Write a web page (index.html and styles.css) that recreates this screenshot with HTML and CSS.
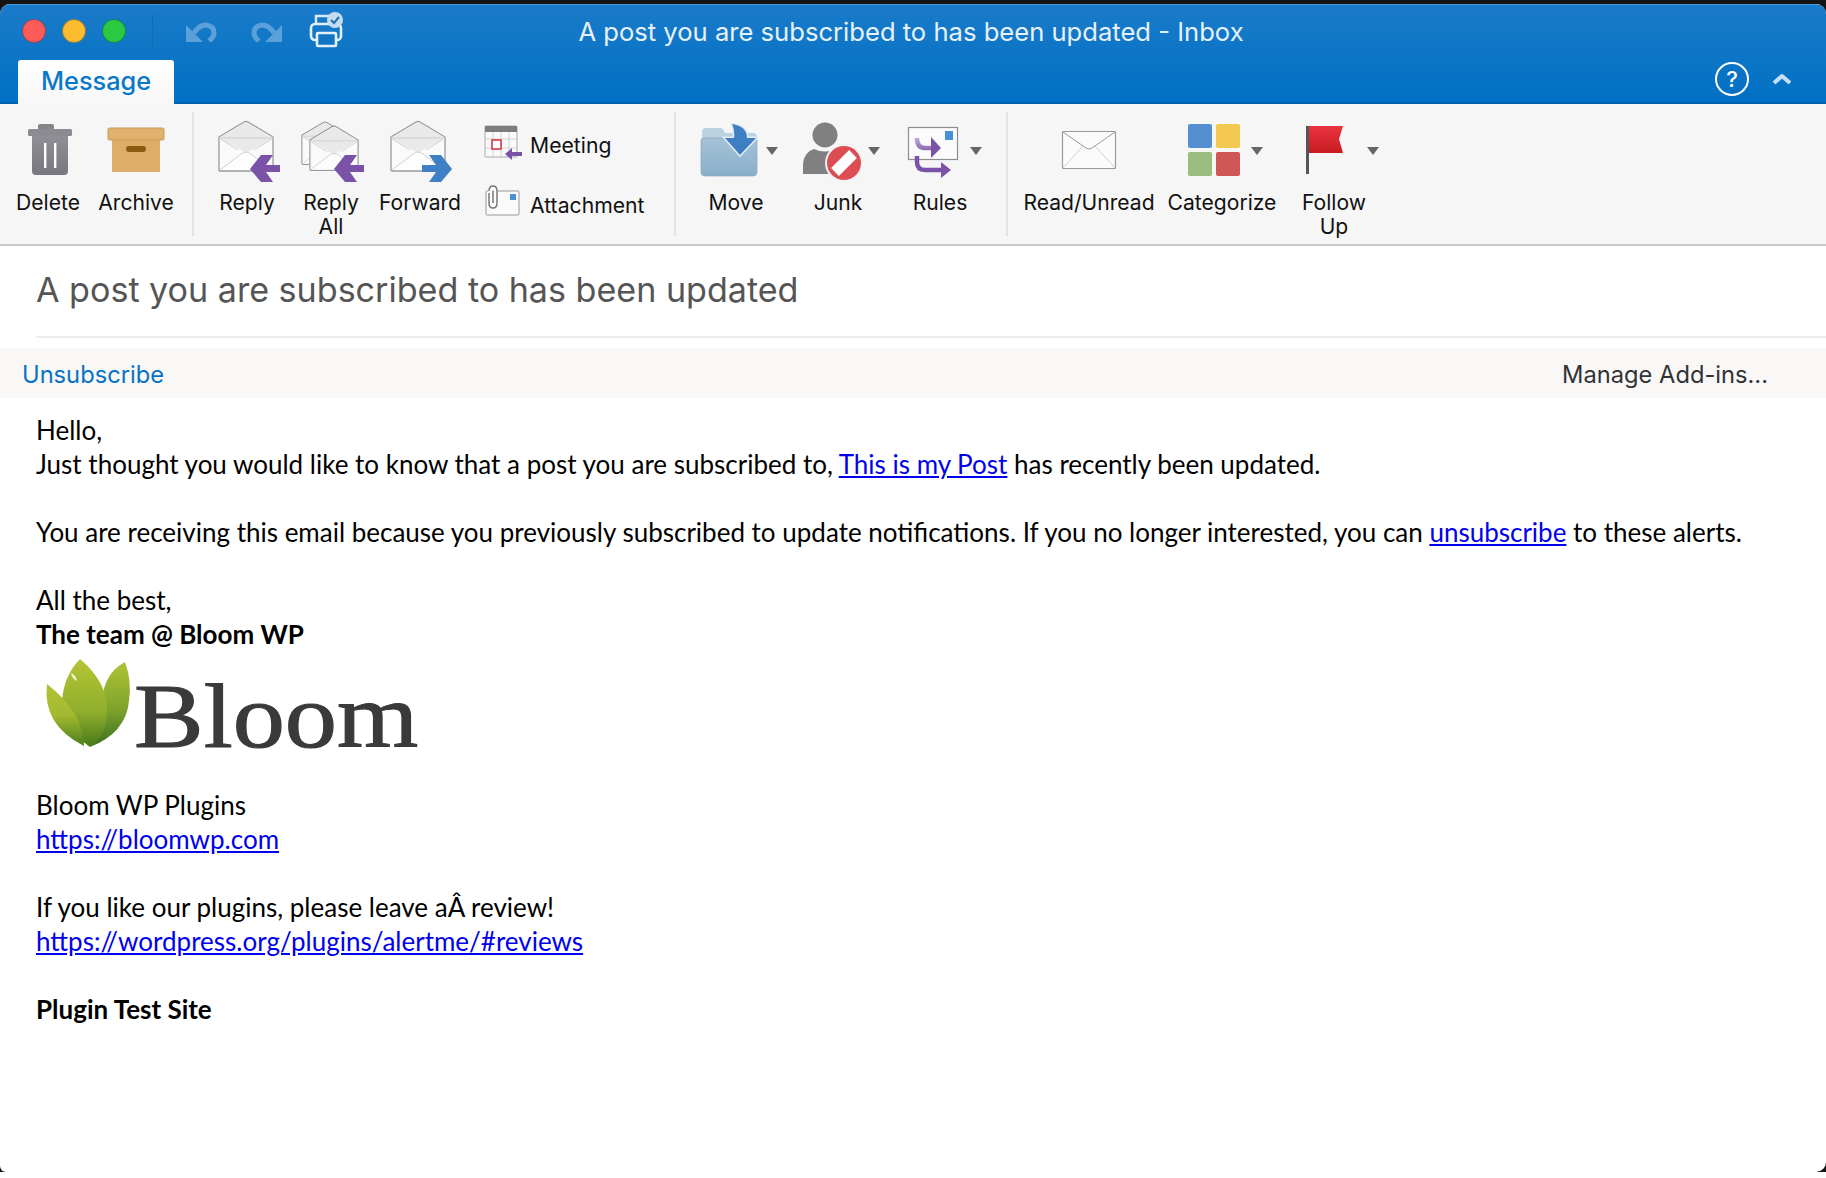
FILE: index.html
```html
<!DOCTYPE html>
<html lang="en">
<head>
    <meta charset="UTF-8">
    <title>A post you are subscribed to has been updated - Inbox</title>
    <link rel="stylesheet" href="styles.css">
</head>
<body>
    <svg class="sprite" aria-hidden="true">
        <defs>
            <symbol id="open-env" viewBox="0 0 56 52">
                <path d="M1 17 L26 2 Q28 1 30 2 L55 17 V50 Q55 51 54 51 H2 Q1 51 1 50 Z" fill="#fafafa" stroke="#9a9a9a" stroke-width="1.3"/>
                <path d="M2 18 L26 3 Q28 2 30 3 L54 18 L28 33 Z" fill="#e9e9e9"/>
                <path d="M1 18 H55 M1 18 L20 30 M55 18 L36 30" fill="none" stroke="#cfcfcf" stroke-width="1"/>
                <path d="M2 50 L23 34 Q28 30 33 34 L54 50" fill="#fdfdfd" stroke="#cfcfcf" stroke-width="1"/>
            </symbol>
            <symbol id="undo-arrow" viewBox="0 0 32 20">
                <path d="M8 11 Q13 3 20 3 Q28 4 28 11 Q28 15 23 19" fill="none" stroke="#5ba0d9" stroke-width="5"/>
                <path d="M0 3 V20 H17 Z" fill="#5ba0d9"/>
            </symbol>
            <linearGradient id="trash-grad" x1="0" y1="0" x2="0" y2="1">
                <stop offset="0" stop-color="#8f8f95"/>
                <stop offset="1" stop-color="#77777f"/>
            </linearGradient>
            <linearGradient id="folder-grad" x1="0" y1="0" x2="0" y2="1">
                <stop offset="0" stop-color="#a5c2d8"/>
                <stop offset="1" stop-color="#8aafca"/>
            </linearGradient>
            <linearGradient id="flag-grad" x1="0" y1="0" x2="0" y2="1">
                <stop offset="0" stop-color="#ea3340"/>
                <stop offset="1" stop-color="#c81c22"/>
            </linearGradient>
            <linearGradient id="rule-grad" gradientUnits="userSpaceOnUse" x1="0" y1="22" x2="0" y2="40">
                <stop offset="0" stop-color="#c9b8de"/>
                <stop offset="1" stop-color="#7a52a8"/>
            </linearGradient>
            <linearGradient id="leaf-a" x1="0" y1="0" x2="0" y2="1">
                <stop offset="0" stop-color="#b5c534"/>
                <stop offset="0.6" stop-color="#8fae2c"/>
                <stop offset="1" stop-color="#47791c"/>
            </linearGradient>
            <linearGradient id="leaf-b" x1="0" y1="0" x2="0" y2="1">
                <stop offset="0" stop-color="#b0c235"/>
                <stop offset="0.55" stop-color="#7fa42c"/>
                <stop offset="1" stop-color="#3b6f1c"/>
            </linearGradient>
            <linearGradient id="leaf-c" x1="0" y1="0" x2="0" y2="1">
                <stop offset="0" stop-color="#b2c239"/>
                <stop offset="0.5" stop-color="#a3ba2e"/>
                <stop offset="1" stop-color="#4d7f1e"/>
            </linearGradient>
        </defs>
    </svg>

    <div class="frame">
        <div class="window">
            <header class="chrome">
                <div class="titlebar">
                    <div class="controls">
                        <span class="light light-red"></span>
                        <span class="light light-yellow"></span>
                        <span class="light light-green"></span>
                        <span class="divider"></span>
                        <svg class="qa-undo" width="32" height="20"><use href="#undo-arrow"/></svg>
                        <svg class="qa-redo" width="32" height="20"><use href="#undo-arrow" transform="translate(32 0) scale(-1 1)"/></svg>
                        <svg class="qa-print" width="36" height="36" viewBox="0 0 36 36">
                            <path d="M7 13 V4 H20 V13" fill="none" stroke="#d9e9f7" stroke-width="2.4"/>
                            <rect x="2" y="12" width="30" height="16" rx="4" fill="none" stroke="#e3eff9" stroke-width="2.6"/>
                            <rect x="8" y="21" width="19" height="13" rx="1" fill="#1275c4" stroke="#e3eff9" stroke-width="2.6"/>
                            <circle cx="26" cy="8" r="8" fill="#c4dcf1"/>
                            <path d="M22 8 L25 11 L30 5" fill="none" stroke="#1d6fb5" stroke-width="2"/>
                        </svg>
                    </div>
                    <div class="window-title">A post you are subscribed to has been updated - Inbox</div>
                    <div></div>
                </div>
                <div class="tabrow">
                    <div class="tab">Message</div>
                    <div class="tabrow-right">
                        <span class="help">?</span>
                        <svg width="20" height="12" viewBox="0 0 20 12">
                            <path d="M2 10 L10 3 L18 10" fill="none" stroke="#c5dff5" stroke-width="4" stroke-linejoin="round"/>
                        </svg>
                    </div>
                </div>
            </header>

            <div class="ribbon">
                <div class="rb-item w-delete">
                    <svg class="rb-icon" viewBox="0 0 72 72">
                        <rect x="26" y="10" width="16" height="6" rx="2" fill="#85858b"/>
                        <rect x="16" y="15" width="44" height="7" rx="1.5" fill="#8b8b91"/>
                        <path d="M20 22 H56 V57 Q56 61 52 61 H24 Q20 61 20 57 Z" fill="url(#trash-grad)"/>
                        <rect x="32" y="29" width="2.4" height="25" fill="#fff"/>
                        <rect x="42" y="29" width="2.4" height="25" fill="#fff"/>
                    </svg>
                    <span class="rb-label">Delete</span>
                </div>
                <div class="rb-item w-delete">
                    <svg class="rb-icon" viewBox="0 0 72 72">
                        <rect x="12" y="20" width="48" height="38" rx="1" fill="#deae68"/>
                        <rect x="8" y="14" width="56" height="12" rx="1.5" fill="#e0b16e" stroke="#c99a52" stroke-width="1"/>
                        <rect x="26" y="32" width="20" height="6" rx="3" fill="#8a5a10"/>
                    </svg>
                    <span class="rb-label">Archive</span>
                </div>
                <div class="rb-sep sep-one"></div>

                <div class="rb-item w-reply first-reply">
                    <svg class="rb-icon" viewBox="0 0 72 72">
                        <use href="#open-env" x="7" y="6" width="56" height="52"/>
                        <path d="M39 55 L50 41 H62 L55 51 H69 V58 H55 L62 68 H50 Z" fill="#7a52a8"/>
                    </svg>
                    <span class="rb-label">Reply</span>
                </div>
                <div class="rb-item w-reply">
                    <svg class="rb-icon" viewBox="0 0 72 72">
                        <use href="#open-env" x="6" y="6" width="48" height="46"/>
                        <use href="#open-env" x="14" y="10" width="50" height="48"/>
                        <path d="M39 55 L50 41 H62 L55 51 H69 V58 H55 L62 68 H50 Z" fill="#7a52a8"/>
                    </svg>
                    <span class="rb-label">Reply<br>All</span>
                </div>
                <div class="rb-item w-forward">
                    <svg class="rb-icon" viewBox="0 0 72 72">
                        <use href="#open-env" x="6" y="6" width="56" height="52"/>
                        <path d="M68 55 L57 41 H45 L52 51 H38 V58 H52 L45 68 H57 Z" fill="#3f7fc4"/>
                    </svg>
                    <span class="rb-label">Forward</span>
                </div>

                <div class="rb-stack">
                    <div class="stack-row">
                        <svg class="stack-icon" viewBox="0 0 40 40">
                            <rect x="1" y="1" width="32" height="31" rx="1" fill="#fafafa" stroke="#aaa" stroke-width="1"/>
                            <rect x="1" y="1" width="32" height="6" fill="#7d7d7d"/>
                            <path d="M1 14 H33 M1 23 H33 M9 7 V32 M17 7 V32 M25 7 V32" stroke="#d2d2d2" stroke-width="1"/>
                            <rect x="8" y="15" width="9" height="9" fill="#fff" stroke="#d64f57" stroke-width="1.8"/>
                            <path d="M21 29 L28 23 L28 27 H38 V31 H28 L28 35 Z" fill="#7a52a8"/>
                        </svg>
                        <span>Meeting</span>
                    </div>
                    <div class="stack-row">
                        <svg class="stack-icon" viewBox="0 0 40 40">
                            <rect x="2" y="6" width="33" height="24" rx="1" fill="#fafafa" stroke="#999" stroke-width="1"/>
                            <rect x="26" y="9" width="6" height="6" fill="#4a90d9"/>
                            <path d="M6 13 V7 Q6 3 9 3 Q12 3 12 7 V18 Q12 20 10 20 Q8 20 8 18 V8" fill="none" stroke="#fafafa" stroke-width="4"/>
                            <path d="M5 8 V18 Q5 23 9 23 Q13 23 13 18 V6 Q13 1 9 1 Q5 1 5 6 M9 6 V18" fill="none" stroke="#777" stroke-width="1.5"/>
                        </svg>
                        <span>Attachment</span>
                    </div>
                </div>
                <div class="rb-sep sep-two"></div>

                <div class="rb-item w-move">
                    <svg class="rb-icon" viewBox="0 0 72 72">
                        <path d="M2 18 Q2 14 6 14 H20 Q23 14 24 17 L25 19 H53 Q57 19 57 23 V30 H2 Z" fill="#bad2e2"/>
                        <path d="M1 27 Q1 24 4 24 H54 Q57 24 57 27 V58 Q57 62 53 62 H5 Q1 62 1 58 Z" fill="url(#folder-grad)" stroke="#7f9fb8" stroke-width="0.6"/>
                        <path d="M32 10 Q47 12 47 24 H56 L40 41 L25 24 H34 Q35 17 32 10 Z" fill="#3d7fc2" stroke="#e4edf3" stroke-width="3" paint-order="stroke"/>
                    </svg>
                    <span class="caret caret-a"></span>
                    <span class="rb-label">Move</span>
                </div>
                <div class="rb-item w-move">
                    <svg class="rb-icon" viewBox="0 0 72 72">
                        <circle cx="23" cy="21" r="12.5" fill="#808080"/>
                        <path d="M1 60 V50 Q2 38 12 35 Q23 40 34 35 Q42 38 44 46 L30 60 Z" fill="#808080"/>
                        <circle cx="42" cy="49" r="19" fill="#f2f2f2"/>
                        <circle cx="42" cy="49" r="17" fill="#dc4d54"/>
                        <path d="M33 58 L51 40" stroke="#fff" stroke-width="11"/>
                    </svg>
                    <span class="caret caret-a"></span>
                    <span class="rb-label">Junk</span>
                </div>
                <div class="rb-item w-move">
                    <svg class="rb-icon" viewBox="0 0 72 72">
                        <rect x="4.5" y="13.5" width="49" height="32" fill="#fbfbfb" stroke="#8e8e8e" stroke-width="1.2"/>
                        <rect x="41" y="17" width="8" height="9" fill="#4a90d9"/>
                        <path d="M13 24 Q13 34 21 34 H28" fill="none" stroke="url(#rule-grad)" stroke-width="4.5"/>
                        <path d="M27 23 L37 34 L27 44 Z" fill="#7a52a8"/>
                        <path d="M13 42 V48 Q13 56 21 56 H38" fill="none" stroke="#7a52a8" stroke-width="4.5"/>
                        <path d="M37 48 L47 56 L37 64 Z" fill="#7a52a8"/>
                    </svg>
                    <span class="caret caret-a"></span>
                    <span class="rb-label">Rules</span>
                </div>
                <div class="rb-sep sep-three"></div>

                <div class="rb-item w-read">
                    <svg class="rb-icon" viewBox="0 0 72 72">
                        <rect x="9.5" y="17.5" width="53" height="37" rx="1" fill="#fbfbfb" stroke="#999" stroke-width="1.2"/>
                        <path d="M10 18 L33 34 Q36 36 39 34 L62 18" fill="none" stroke="#9a9a9a" stroke-width="1"/>
                        <path d="M10 54 L30 32 M62 54 L42 32" fill="none" stroke="#d0d0d0" stroke-width="1"/>
                    </svg>
                    <span class="rb-label">Read/Unread</span>
                </div>
                <div class="rb-item w-cat">
                    <svg class="rb-icon" viewBox="0 0 72 72">
                        <rect x="2" y="10" width="24" height="24" rx="2" fill="#5290d2"/>
                        <rect x="30" y="10" width="24" height="24" rx="2" fill="#f2c94e"/>
                        <rect x="2" y="38" width="24" height="24" rx="2" fill="#9abd7f"/>
                        <rect x="30" y="38" width="24" height="24" rx="2" fill="#cf5656"/>
                    </svg>
                    <span class="caret caret-b"></span>
                    <span class="rb-label">Categorize</span>
                </div>
                <div class="rb-item w-follow">
                    <svg class="rb-icon" viewBox="0 0 72 72">
                        <rect x="8" y="12" width="3" height="48" fill="#555"/>
                        <path d="M11 12 H45 L41 25 L45 39 H11 Z" fill="url(#flag-grad)"/>
                    </svg>
                    <span class="caret caret-c"></span>
                    <span class="rb-label">Follow<br>Up</span>
                </div>
            </div>

            <h1 class="subject">A post you are subscribed to has been updated</h1>
            <div class="addin-bar">
                <a class="addin-link">Unsubscribe</a>
                <span class="addin-manage">Manage Add-ins...</span>
            </div>

            <div class="mail-body">
                Hello,<br>
                Just thought you would like to know that a post you are subscribed to, <a href="#">This is my Post</a> has recently been updated.<br>
                <br>
                You are receiving this email because you previously subscribed to update notifications. If you no longer interested, you can <a href="#">unsubscribe</a> to these alerts.<br>
                <br>
                All the best,<br>
                <strong>The team @ Bloom WP</strong><br>
                <svg class="logo" width="400" height="124" viewBox="0 0 400 124">
                    <path d="M89 11 Q68 22 66 50 Q70 84 54 96 Q90 82 93 50 Q96 30 89 11 Z" fill="url(#leaf-b)"/>
                    <path d="M44 8 Q28 24 26 50 Q28 78 54 96 Q72 84 71 56 Q70 30 44 8 Z" fill="url(#leaf-a)"/>
                    <path d="M11 33 Q6 74 48 95 Q48 62 11 33 Z" fill="url(#leaf-c)"/>
                    <path d="M35 22 Q40 24 41 30 Q36 28 35 22 Z" fill="#eef2d0"/>
                    <text class="logo-word" transform="translate(98 96) scale(1.135 1)" x="0" y="0">Bloom</text>
                </svg><br>
                <br>
                Bloom WP Plugins<br>
                <a href="#">https://bloomwp.com</a><br>
                <br>
                If you like our plugins, please leave aÂ review!<br>
                <a href="#">https://wordpress.org/plugins/alertme/#reviews</a><br>
                <br>
                <strong>Plugin Test Site</strong>
            </div>
        </div>
    </div>
</body>
</html>
```

FILE: styles.css
```css
body {
    margin: 0;
    background: #fff;
    font-family: Inter, "Noto Sans", sans-serif;
}
.sprite {
    position: absolute;
    width: 0;
    height: 0;
}
.frame {
    height: 1172px;
    padding-top: 4px;
    box-sizing: border-box;
    background: #141414;
}
.window {
    height: 1168px;
    background: #fff;
    border-radius: 10px 10px 10px 6px;
    overflow: hidden;
}

/* title bar */
.chrome {
    height: 100px;
    box-sizing: border-box;
    background: linear-gradient(#1a7bc9, #0070c4);
    border-top: 1px solid #4a97d5;
    border-bottom: 2px solid #0062ad;
}
.titlebar {
    height: 51px;
    display: grid;
    grid-template-columns: 1fr auto 1fr;
    align-items: center;
}
.controls {
    display: flex;
    align-items: center;
    padding-left: 22px;
}
.light {
    width: 22px;
    height: 22px;
    border-radius: 50%;
    margin-right: 16px;
    border: 1px solid rgba(0, 50, 110, 0.45);
}
.light-red { background: #fc5b57; }
.light-yellow { background: #fdbc2e; }
.light-green { background: #29c941; }
.divider {
    width: 1px;
    height: 32px;
    background: #136bb2;
    margin-left: 10px;
    margin-right: 33px;
}
.qa-undo { margin-right: 32px; margin-top: 2px; }
.qa-redo { margin-right: 27px; margin-top: 2px; }
.qa-print { margin-top: -2px; }
.window-title {
    font-size: 25.6px;
    color: #e6f1fa;
    margin-top: 2px;
    margin-right: 4px;
}
.tabrow {
    height: 46px;
    display: flex;
    justify-content: space-between;
    align-items: flex-end;
}
.tab {
    margin-left: 18px;
    width: 156px;
    height: 44px;
    margin-bottom: -2px;
    background: linear-gradient(#fff, #f7f7f7);
    border-radius: 3px 3px 0 0;
    color: #0a78c8;
    font-size: 25.3px;
    font-weight: 500;
    line-height: 42px;
    text-align: center;
}
.tabrow-right {
    display: flex;
    align-items: center;
    gap: 23px;
    padding-right: 34px;
    height: 46px;
}
.help {
    width: 30px;
    height: 30px;
    border: 2px solid #fff;
    border-radius: 50%;
    color: #fff;
    font-size: 22px;
    font-weight: 500;
    line-height: 30px;
    text-align: center;
}

/* ribbon */
.ribbon {
    height: 142px;
    box-sizing: border-box;
    display: flex;
    padding-left: 4px;
    background: #f6f6f6;
    border-bottom: 2px solid #c8c8c8;
}
.rb-item {
    position: relative;
    display: flex;
    flex-direction: column;
    align-items: center;
    padding-top: 10px;
}
.rb-icon {
    width: 72px;
    height: 72px;
}
.rb-label {
    margin-top: 5px;
    font-size: 21.1px;
    line-height: 24px;
    text-align: center;
    color: #111;
}
.w-delete { width: 88px; }
.w-reply { width: 84px; }
.w-forward { width: 94px; }
.w-move { width: 102px; }
.w-read { width: 134px; }
.w-cat { width: 132px; }
.w-follow { width: 92px; }
.first-reply { margin-left: 11px; }
.rb-sep {
    width: 2px;
    height: 124px;
    margin-top: 8px;
    background: #e3e3e3;
}
.sep-one { margin-left: 12px; }
.sep-two { margin-right: 9px; }
.sep-three { margin-left: 15px; margin-right: 14px; }
.rb-stack {
    width: 190px;
    margin-left: 17px;
    padding-top: 11px;
}
.stack-row {
    height: 60px;
    display: flex;
    align-items: center;
    gap: 6px;
    font-size: 21.2px;
    color: #111;
}
.stack-icon {
    width: 40px;
    height: 40px;
}
.caret {
    position: absolute;
    top: 43px;
    border-left: 6px solid transparent;
    border-right: 6px solid transparent;
    border-top: 8px solid #666;
}
.caret-a { left: 81px; }
.caret-b { left: 95px; }
.caret-c { left: 79px; }

/* subject and add-in bar */
.subject {
    margin: 0 0 0 36px;
    height: 92px;
    box-sizing: border-box;
    border-bottom: 2px solid #ececec;
    font-size: 34.1px;
    font-weight: 400;
    line-height: 88px;
    color: #555;
}
.addin-bar {
    height: 50px;
    box-sizing: border-box;
    padding: 2px 58px 0 22px;
    margin-top: 10px;
    display: flex;
    justify-content: space-between;
    align-items: center;
    background: #f9f8f7;
    font-size: 23.7px;
}
.addin-link { color: #0a72c4; }
.addin-manage { color: #333; }

/* message */
.mail-body {
    padding: 15px 0 0 36px;
    font-family: Lato, "Open Sans", sans-serif;
    font-size: 26px;
    line-height: 34px;
    color: #000;
}
.mail-body a {
    color: #0000ee;
}
/* taller than its line so the wordmark's descent area fits, the margin takes it back */
.logo {
    display: inline-block;
    vertical-align: top;
    margin-bottom: -21px;
}
.logo-word {
    font-family: "Liberation Serif", serif;
    font-size: 92px;
    fill: #3a3a3a;
    stroke: #3a3a3a;
    stroke-width: 1.1px;
}
```
